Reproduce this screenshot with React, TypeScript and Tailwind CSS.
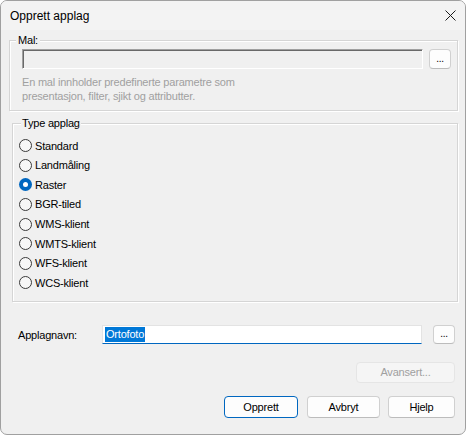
import { useState } from "react";

const types = ["Standard", "Landmåling", "Raster", "BGR-tiled", "WMS-klient", "WMTS-klient", "WFS-klient", "WCS-klient"];

function Radio({ label, checked, onSelect }: { label: string; checked: boolean; onSelect: () => void }) {
  return (
    <div className="flex h-[19.57px] items-center cursor-default" onClick={onSelect}>
      {checked ? (
        <span className="flex h-[13px] w-[13px] items-center justify-center rounded-full bg-[#0067c0]">
          <span className="h-[5px] w-[5px] rounded-full bg-white" />
        </span>
      ) : (
        <span className="h-[13px] w-[13px] rounded-full border border-[#3a3a3a] bg-[#f7f7f7]" />
      )}
      <span className="ml-[3px]">{label}</span>
    </div>
  );
}

function Btn({ children, className = "", disabled = false }: { children: React.ReactNode; className?: string; disabled?: boolean }) {
  return (
    <button
      disabled={disabled}
      className={
        "flex items-center justify-center rounded-[4px] border leading-none " +
        (disabled
          ? "border-[#e5e5e5] bg-[#f5f5f5] text-[#a0a0a0] "
          : "border-[#d0d0d0] border-b-[#bcbcbc] bg-[#fdfdfd] text-black ") +
        className
      }
    >
      {children}
    </button>
  );
}

export default function App() {
  const [selected, setSelected] = useState("Raster");

  return (
    <div
      className="flex h-[435px] w-[466px] flex-col overflow-hidden rounded-[7px] border border-[#a0a0a0] bg-[#f0f0f0] text-[11px] leading-[14px] tracking-[-0.2px] text-black"
      style={{ fontFamily: '"Liberation Sans", Arial, sans-serif' }}
    >
      {/* Title bar */}
      <div className="flex h-[29px] shrink-0 items-center justify-between bg-[#f3f3f3] pl-[9px] pr-[9px]">
        <span className="text-[12px] tracking-normal">Opprett applag</span>
        <svg width="11" height="11" viewBox="0 0 11 11" className="mb-[1px]">
          <path d="M0.5 0.5 L10.5 10.5 M10.5 0.5 L0.5 10.5" stroke="#1a1a1a" strokeWidth="1" />
        </svg>
      </div>

      {/* Mal group */}
      <div className="relative ml-[8px] mt-[10px] h-[71px] w-[449px] border border-[#d5d5d5] pl-[12px] pt-[8px] shadow-[inset_1px_1px_0_#ffffff,1px_1px_0_#ffffff]">
        <span className="absolute -top-[7px] left-[6px] bg-[#f0f0f0] px-[2px] leading-[13px]">Mal:</span>
        <div className="flex items-center">
          <div className="h-[20px] w-[401px] border border-[#a0a0a0] border-b-white border-r-white bg-[#f0f0f0] shadow-[inset_1px_1px_0_#696969]" />
          <Btn className="ml-[6px] h-[20px] w-[22px] items-end pb-[4px] text-[10px]">...</Btn>
        </div>
        <div className="mt-[6px] text-[#a0a0a0]">
          <div>En mal innholder predefinerte parametre som</div>
          <div>presentasjon, filter, sjikt og attributter.</div>
        </div>
      </div>

      {/* Type applag group */}
      <div className="relative ml-[11px] mt-[12px] h-[179px] w-[446px] border border-[#d5d5d5] pl-[6px] pt-[12px] shadow-[inset_1px_1px_0_#ffffff,1px_1px_0_#ffffff]">
        <span className="absolute -top-[7px] left-[8px] bg-[#f0f0f0] px-[1px] leading-[13px]">Type applag</span>
        {types.map((t) => (
          <Radio key={t} label={t} checked={selected === t} onSelect={() => setSelected(t)} />
        ))}
      </div>

      {/* Applagnavn row */}
      <div className="ml-[17px] mt-[23px] flex items-center">
        <span className="w-[84px]">Applagnavn:</span>
        <div className="flex h-[19px] w-[320px] items-center border border-[#e3e3e3] border-b-[#0067c0] bg-white pl-[2px]">
          <span className="bg-[#0078d7] px-[1px] leading-[15px] text-white">Ortofoto</span>
        </div>
        <Btn className="ml-[11px] h-[19px] w-[22px] items-end pb-[4px] text-[10px]">...</Btn>
      </div>

      {/* Avansert */}
      <div className="mr-[10px] mt-[18px] flex justify-end">
        <Btn disabled className="h-[21px] w-[99px]">Avansert...</Btn>
      </div>

      {/* Bottom buttons */}
      <div className="mr-[10px] mt-[13px] flex justify-end gap-[9px]">
        <Btn className="h-[22px] w-[74px] !border-[#0067c0]">Opprett</Btn>
        <Btn className="h-[22px] w-[73px]">Avbryt</Btn>
        <Btn className="-ml-[1px] h-[22px] w-[67px]">Hjelp</Btn>
      </div>
    </div>
  );
}
